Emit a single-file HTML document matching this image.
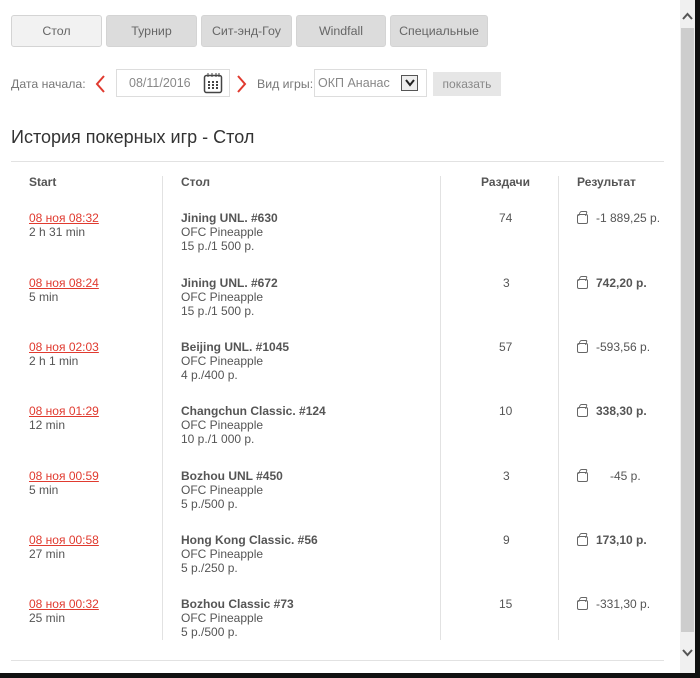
<!DOCTYPE html>
<html><head><meta charset="utf-8"><style>
*{margin:0;padding:0;box-sizing:border-box}
body{width:700px;height:678px;background:#fff;font-family:"Liberation Sans",Arial,sans-serif;position:relative;overflow:hidden;font-size:12px;color:#555}
.a{position:absolute;white-space:nowrap}
.tab{position:absolute;top:15px;height:32px;border:1px solid #d4d4d4;border-radius:3px;background:#dcdcdc;color:#666;font-size:12.4px;text-align:center;line-height:31px}
.line{position:absolute;height:1px;background:#e2e2e2;left:11px;width:653px}
.v{position:absolute;width:1px;background:#e2e2e2;top:176px;height:464px}
.lk{color:#e03a2f;text-decoration:underline}
.b{font-weight:bold;color:#555}
.w{position:absolute;width:11px;height:10px;border:1px solid #666;border-radius:2px}
.w:before{content:"";position:absolute;left:1px;top:-4px;width:6px;height:4px;border:1px solid #666;border-bottom:none;border-radius:2px 2px 0 0;transform:skewX(-20deg)}
</style></head><body>
<div class="tab" style="left:11px;width:91px;background:#f2f2f2">Стол</div>
<div class="tab" style="left:106px;width:91px">Турнир</div>
<div class="tab" style="left:201px;width:91px">Сит-энд-Гоу</div>
<div class="tab" style="left:296px;width:90px">Windfall</div>
<div class="tab" style="left:390px;width:98px">Специальные</div>

<div class="a" style="left:11px;top:77px;font-size:12.3px;color:#777">Дата начала:</div>
<svg class="a" style="left:94px;top:75px" width="12" height="18"><path d="M10 1 L3 9 L10 17" stroke="#e03a2f" stroke-width="2" fill="none"/></svg>
<div class="a" style="left:116px;top:69px;width:114px;height:28px;border:1px solid #ddd;background:#fff"></div>
<div class="a" style="left:129px;top:76px;font-size:12.5px;color:#888">08/11/2016</div>
<svg class="a" style="left:203px;top:72px" width="20" height="22"><rect x="1.5" y="3.5" width="17" height="17" rx="2" fill="none" stroke="#444" stroke-width="1.5"/><path d="M5 1v4M9 1v4M13 1v4M16 1v4" stroke="#444"/><g fill="#444"><rect x="5" y="9" width="2" height="2"/><rect x="9" y="9" width="2" height="2"/><rect x="13" y="9" width="2" height="2"/><rect x="5" y="12" width="2" height="2"/><rect x="9" y="12" width="2" height="2"/><rect x="13" y="12" width="2" height="2"/><rect x="5" y="15" width="2" height="2"/><rect x="9" y="15" width="2" height="2"/><rect x="13" y="15" width="2" height="2"/></g></svg>
<svg class="a" style="left:236px;top:75px" width="12" height="18"><path d="M2 1 L9 9 L2 17" stroke="#e03a2f" stroke-width="2" fill="none"/></svg>
<div class="a" style="left:257px;top:77px;font-size:12.3px;color:#777">Вид игры:</div>
<div class="a" style="left:314px;top:69px;width:113px;height:28px;border:1px solid #ddd;background:#fff"></div>
<div class="a" style="left:318px;top:76px;font-size:12.5px;color:#888">ОКП Ананас</div>
<div class="a" style="left:401px;top:75px;width:17px;height:16px;border:1px solid #555;background:#eee"></div>
<svg class="a" style="left:404px;top:78px" width="12" height="10"><path d="M2 2 L6 7 L10 2" stroke="#222" stroke-width="2" fill="none"/></svg>
<div class="a" style="left:433px;top:72px;width:68px;height:24px;background:#e6e6e6;color:#888;font-size:12px;text-align:center;line-height:24px">показать</div>

<div class="a" style="left:11px;top:127px;font-size:18px;color:#333">История покерных игр - Стол</div>
<div class="line" style="top:161px"></div>
<div class="line" style="top:660px"></div>
<div class="v" style="left:162px"></div>
<div class="v" style="left:440px"></div>
<div class="v" style="left:558px"></div>

<div class="a b" style="left:29px;top:175px">Start</div>
<div class="a b" style="left:181px;top:175px">Стол</div>
<div class="a b" style="left:481px;top:175px">Раздачи</div>
<div class="a b" style="left:577px;top:175px">Результат</div>

<div class="a" style="left:29px;top:211px;line-height:14px"><span class="lk">08 ноя 08:32</span><br>2 h 31 min</div>
<div class="a" style="left:181px;top:211px;line-height:14px"><span class="b">Jining UNL. #630</span><br>OFC Pineapple<br>15 р./1 500 р.</div>
<div class="a" style="left:499px;top:211px">74</div>
<div class="w" style="left:577px;top:214px"></div><div class="a" style="left:596px;top:211px">-1 889,25 р.</div>

<div class="a" style="left:29px;top:276px;line-height:14px"><span class="lk">08 ноя 08:24</span><br>5 min</div>
<div class="a" style="left:181px;top:276px;line-height:14px"><span class="b">Jining UNL. #672</span><br>OFC Pineapple<br>15 р./1 500 р.</div>
<div class="a" style="left:503px;top:276px">3</div>
<div class="w" style="left:577px;top:279px"></div><div class="a b" style="left:596px;top:276px">742,20 р.</div>

<div class="a" style="left:29px;top:340px;line-height:14px"><span class="lk">08 ноя 02:03</span><br>2 h 1 min</div>
<div class="a" style="left:181px;top:340px;line-height:14px"><span class="b">Beijing UNL. #1045</span><br>OFC Pineapple<br>4 р./400 р.</div>
<div class="a" style="left:499px;top:340px">57</div>
<div class="w" style="left:577px;top:343px"></div><div class="a" style="left:596px;top:340px">-593,56 р.</div>

<div class="a" style="left:29px;top:404px;line-height:14px"><span class="lk">08 ноя 01:29</span><br>12 min</div>
<div class="a" style="left:181px;top:404px;line-height:14px"><span class="b">Changchun Classic. #124</span><br>OFC Pineapple<br>10 р./1 000 р.</div>
<div class="a" style="left:499px;top:404px">10</div>
<div class="w" style="left:577px;top:407px"></div><div class="a b" style="left:596px;top:404px">338,30 р.</div>

<div class="a" style="left:29px;top:469px;line-height:14px"><span class="lk">08 ноя 00:59</span><br>5 min</div>
<div class="a" style="left:181px;top:469px;line-height:14px"><span class="b">Bozhou UNL #450</span><br>OFC Pineapple<br>5 р./500 р.</div>
<div class="a" style="left:503px;top:469px">3</div>
<div class="w" style="left:577px;top:472px"></div><div class="a" style="left:610px;top:469px">-45 р.</div>

<div class="a" style="left:29px;top:533px;line-height:14px"><span class="lk">08 ноя 00:58</span><br>27 min</div>
<div class="a" style="left:181px;top:533px;line-height:14px"><span class="b">Hong Kong Classic. #56</span><br>OFC Pineapple<br>5 р./250 р.</div>
<div class="a" style="left:503px;top:533px">9</div>
<div class="w" style="left:577px;top:536px"></div><div class="a b" style="left:596px;top:533px">173,10 р.</div>

<div class="a" style="left:29px;top:597px;line-height:14px"><span class="lk">08 ноя 00:32</span><br>25 min</div>
<div class="a" style="left:181px;top:597px;line-height:14px"><span class="b">Bozhou Classic #73</span><br>OFC Pineapple<br>5 р./500 р.</div>
<div class="a" style="left:499px;top:597px">15</div>
<div class="w" style="left:577px;top:600px"></div><div class="a" style="left:596px;top:597px">-331,30 р.</div>

<div class="a" style="left:680px;top:0;width:15px;height:673px;background:#f0f0f0"></div>
<div class="a" style="left:681px;top:28px;width:13px;height:604px;background:#cdcdcd"></div>
<svg class="a" style="left:682px;top:12px" width="11" height="10"><path d="M1 7 L5.5 2 L10 7" stroke="#555" stroke-width="2" fill="none"/></svg>
<svg class="a" style="left:682px;top:648px" width="11" height="10"><path d="M1 2 L5.5 7 L10 2" stroke="#555" stroke-width="2" fill="none"/></svg>
<div class="a" style="left:695px;top:0;width:5px;height:678px;background:#111"></div>
<div class="a" style="left:0;top:673px;width:700px;height:5px;background:#111"></div>
</body></html>
